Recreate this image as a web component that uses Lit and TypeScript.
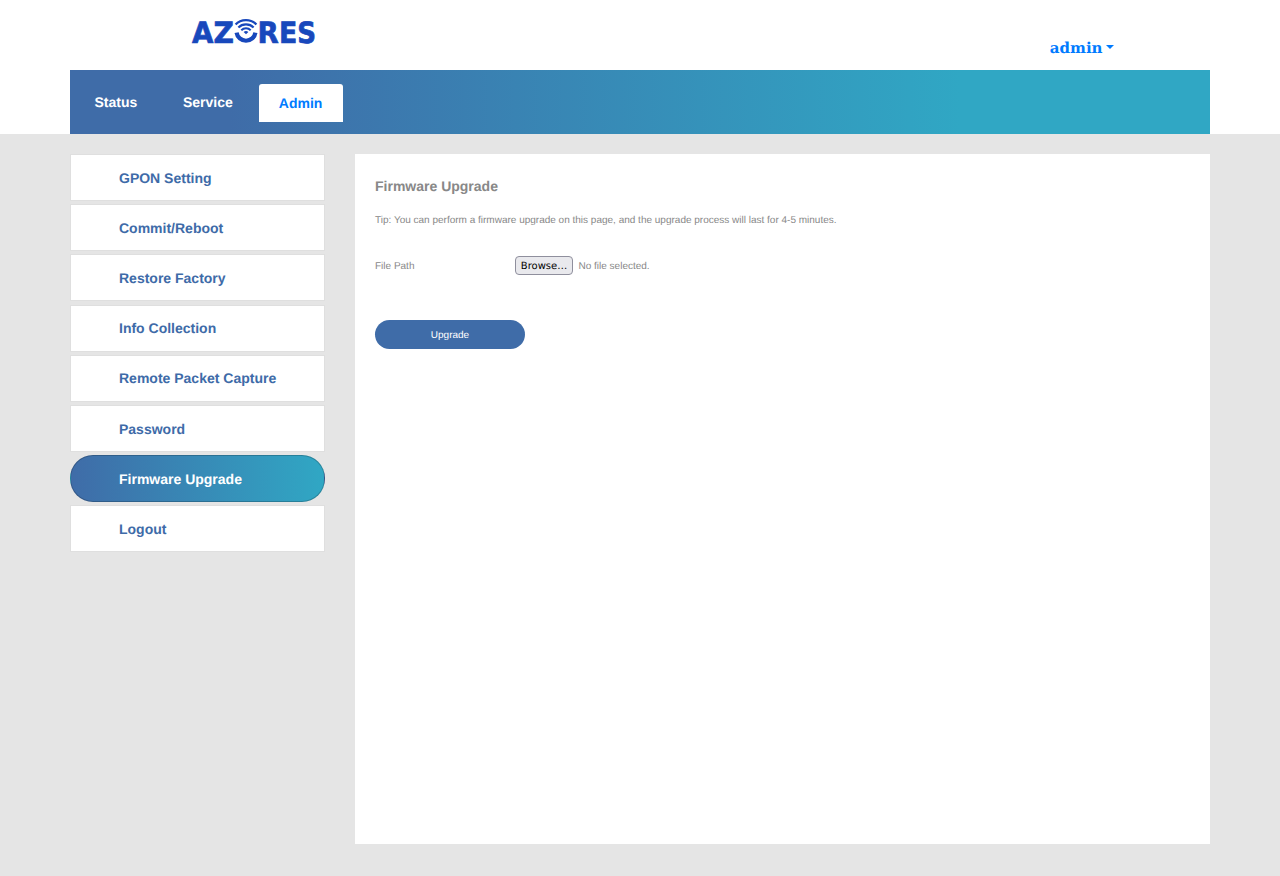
import { LitElement, html, css } from "lit";
import { customElement } from "lit/decorators.js";
import { classMap } from "lit/directives/class-map.js";

const TABS = ["Status", "Service", "Admin"];
const MENU = [
  "GPON Setting",
  "Commit/Reboot",
  "Restore Factory",
  "Info Collection",
  "Remote Packet Capture",
  "Password",
  "Firmware Upgrade",
  "Logout",
];

@customElement("brand-logo")
class BrandLogo extends LitElement {
  static styles = css`
    :host { display: block; line-height: 0; }
    svg { display: block; }
    .word { font: 700 29.2px "DejaVu Sans", sans-serif; fill: #1848bc; stroke: #1848bc; stroke-width: 0.7; }
    .arc { fill: none; stroke: #1848bc; }
    .dot { fill: #1848bc; }
  `;
  render() {
    return html`<svg width="140" height="60" viewBox="190 4 140 60">
      <g class="word">
        <text x="192" y="43" textLength="21.4" lengthAdjust="spacingAndGlyphs">A</text>
        <text x="213.5" y="43" textLength="20.4" lengthAdjust="spacingAndGlyphs">Z</text>
        <text x="257.6" y="43" textLength="21.2" lengthAdjust="spacingAndGlyphs">R</text>
        <text x="278.9" y="43" textLength="18.3" lengthAdjust="spacingAndGlyphs">E</text>
        <text x="297.3" y="43" textLength="18.8" lengthAdjust="spacingAndGlyphs">S</text>
      </g>
      <path class="arc" stroke-width="4.2" d="M236.6 32.6A9.5 9.5 0 0 0 255.4 32.6" />
      <path class="arc" stroke-width="2.3" d="M235.6 24.6C240.8 18.7 251.2 18.7 256.4 24.6" />
      <path class="arc" stroke-width="2.2" d="M238.4 27.6C242.4 23.4 249.6 23.4 253.6 27.6" />
      <path class="arc" stroke-width="2" d="M241.3 30.2C243.9 27.7 248.1 27.7 250.7 30.2" />
      <path class="dot" d="M243.6 32Q246 30 248.4 32L246 34.3Z" />
    </svg>`;
  }
}

@customElement("app-root")
class AppRoot extends LitElement {
  static styles = css`
    :host {
      display: block;
      min-height: 876px;
      background: #e5e5e5;
      color: #888;
      font: 10px/15px "Liberation Sans", Arial, sans-serif;
      text-rendering: geometricPrecision;
    }
    .header { height: 134px; background: #fff; }
    .wrap { width: 1140px; margin: 0 auto; }
    .top { height: 70px; display: flex; justify-content: space-between; box-sizing: border-box; padding: 4px 96px 0 120px; }
    .user {
      display: flex; align-items: center; gap: 3.5px; height: 24px; margin-top: 32px;
      color: #007bff; font: 700 15px/24px "DejaVu Serif", serif;
    }
    .caret { border: 4px solid transparent; border-top-color: #007bff; border-bottom: 0; margin-top: -2px; }
    .nav {
      height: 64px; display: flex; align-items: flex-start; box-sizing: border-box; padding: 14px 0 0 4px;
      background: linear-gradient(90deg, #3f6ca8 14%, #30a7c4 78%);
    }
    .tab { box-sizing: border-box; height: 38px; padding: 0 20.5px; color: #fff; font-size: 14px; font-weight: 700; line-height: 37px; margin-right: 4.6px; }
    .tab.on { width: 84px; margin-left: 1px; background: #fff; color: #007bff; border-radius: 3px 3px 0 0; line-height: 39px; padding: 0 20px; }
    .body { display: flex; gap: 30px; padding-top: 20px; }
    .side { width: 255px; display: flex; flex-direction: column; gap: 3.2px; }
    .item {
      box-sizing: border-box; height: 47px; padding: 0.6px 0 0 48px; border: 1px solid #dfdfdf;
      background: #fff; color: #3e6ba8;
      font-size: 14px; font-weight: 700; line-height: 45.2px;
    }
    .item.on { color: #fff; border-color: rgba(0, 0, 0, 0.2); border-radius: 23px; background: linear-gradient(90deg, #3f6ca8, #30a7c4); }
    .panel { width: 855px; height: 690px; box-sizing: border-box; padding: 24px 20px; background: #fff; }
    .title { margin: 0; font-size: 14px; line-height: 17px; font-weight: 700; }
    .tip { margin: 18px 0 0; }
    .row { display: flex; align-items: center; height: 19px; margin-top: 28px; }
    .label, .status { padding-top: 2px; }
    .label { width: 140px; }
    .browse {
      box-sizing: border-box; width: 58px; height: 19px; padding: 2px 0 0; margin: 0 5.5px 0 0;
      border: 1px solid #8f8f9d; border-radius: 4px; background: #e9e9ed; color: #000;
      font: 10px/15px "DejaVu Sans", sans-serif; text-rendering: inherit;
    }
    .submit {
      display: block; width: 150px; height: 29px; margin-top: 45px; padding: 1px 0 0; border: 0; border-radius: 15px;
      background: #3f6ca8; color: #fff; font: 10px/15px "Liberation Sans", Arial, sans-serif; text-rendering: inherit;
    }
  `;
  render() {
    return html`
      <header class="header">
        <div class="wrap">
          <div class="top">
            <brand-logo></brand-logo>
            <div class="user">admin<span class="caret"></span></div>
          </div>
          <nav class="nav">
            ${TABS.map((t) => html`<div class=${classMap({ tab: true, on: t === "Admin" })}>${t}</div>`)}
          </nav>
        </div>
      </header>
      <div class="wrap body">
        <aside class="side">
          ${MENU.map((m) => html`<div class=${classMap({ item: true, on: m === "Firmware Upgrade" })}>${m}</div>`)}
        </aside>
        <main class="panel">
          <h1 class="title">Firmware Upgrade</h1>
          <p class="tip">Tip: You can perform a firmware upgrade on this page, and the upgrade process will last for 4-5 minutes.</p>
          <div class="row">
            <span class="label">File Path</span>
            <button class="browse">Browse…</button>
            <span class="status">No file selected.</span>
          </div>
          <button class="submit">Upgrade</button>
        </main>
      </div>
    `;
  }
}
